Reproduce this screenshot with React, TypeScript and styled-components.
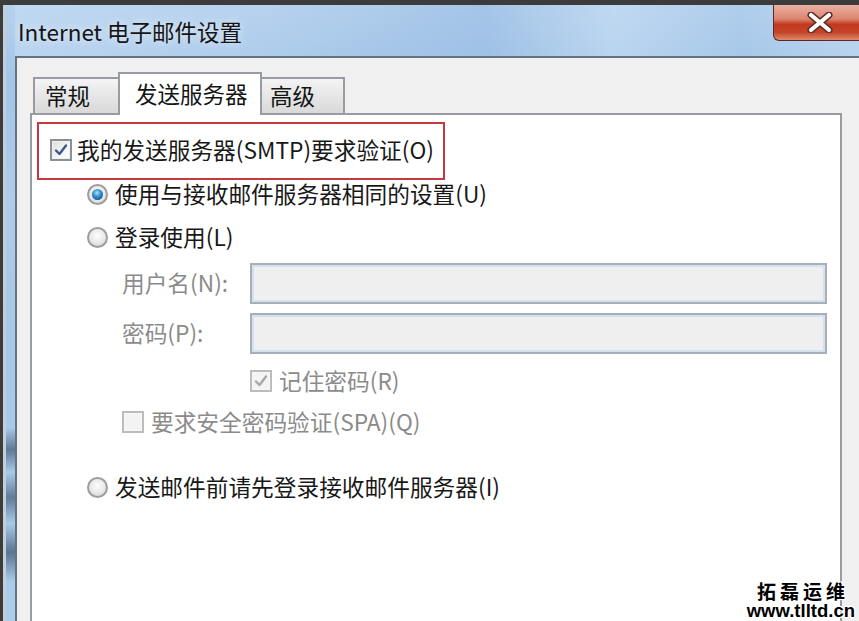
import styled, { createGlobalStyle } from "styled-components";

const GlobalStyle = createGlobalStyle`
html, body {
  margin: 0;
  padding: 0;
}
body {
  background: #3c3c3c;
  width: 859px;
  height: 621px;
  overflow: hidden;
  font-family: "Noto Sans CJK SC", "Noto Sans", sans-serif;
}
`;

const Screen = styled.div`
  position: relative;
  width: 859px;
  height: 621px;
  overflow: hidden;
  padding: 5px 0 0 3px;
  box-sizing: border-box;
`;

const Window = styled.div`
  width: 867px;
  height: 640px;
  box-sizing: border-box;
  border-left: 3px solid #c3ced9;
  padding-left: 9px;
  display: flex;
  flex-direction: column;
  background: linear-gradient(
    180deg,
    #b6d1ee 0%,
    #a4c5e8 12%,
    #aecbea 30%,
    #a6c7e8 55%,
    #a8c9ea 66%,
    #5d7994 69.5%,
    #a8c9ea 73%,
    #5f7c98 77%,
    #a9caea 81%,
    #587591 85.5%,
    #a9caea 90%,
    #b0cfee 100%
  );
`;

const TitleBar = styled.div`
  height: 51px;
  display: flex;
  align-items: center;
  background: linear-gradient(
    90deg,
    rgba(200, 222, 244, 0.55) 0%,
    rgba(186, 212, 240, 0.25) 30%,
    rgba(140, 180, 222, 0.4) 55%,
    rgba(205, 226, 246, 0.45) 70%,
    rgba(160, 196, 232, 0.3) 85%,
    rgba(200, 222, 244, 0.5) 100%
  );
`;

const Title = styled.div`
  padding-left: 3px;
  font-size: 22.5px;
  color: #151515;
  text-shadow: 0 0 8px rgba(255, 255, 255, 0.8);
`;

const CloseButton = styled.div`
  align-self: flex-start;
  margin-left: auto;
  width: 97px;
  height: 36px;
  box-sizing: border-box;
  border: 1px solid #5a2a22;
  border-top: none;
  border-radius: 0 0 0 6px;
  background: linear-gradient(
    180deg,
    #eab1a2 0%,
    #dc8570 40%,
    #c3391f 55%,
    #c5442a 78%,
    #df8a6c 100%
  );
  display: flex;
  align-items: center;
  padding-left: 33px;
`;

const Client = styled.div`
  flex: 1;
  border-top: 2px solid #66727e;
  border-left: 2px solid #66727e;
  background: #f0f0f0;
  padding: 14px 0 0 13px;
  display: flex;
  flex-direction: column;
`;

const TabStrip = styled.div`
  display: flex;
  align-items: flex-end;
  padding-left: 3px;
  position: relative;
  z-index: 1;
`;

const Tab = styled.div<{ $active?: boolean; $w: number; $pad: number }>`
  box-sizing: border-box;
  width: ${(p) => p.$w}px;
  height: ${(p) => (p.$active ? 43 : 36)}px;
  margin-bottom: ${(p) => (p.$active ? -2 : 0)}px;
  position: relative;
  z-index: ${(p) => (p.$active ? 2 : 1)};
  border: 2px solid #989ba1;
  border-bottom: none;
  background: ${(p) =>
    p.$active ? "#ffffff" : "linear-gradient(180deg, #f4f4f4 0%, #e6e6e6 50%, #d9d9d9 100%)"};
  padding: 0 0 2px ${(p) => p.$pad}px;
  display: flex;
  align-items: center;
  font-size: 22.5px;
  color: #151515;
  line-height: 1;
  & + & {
    margin-left: -2px;
  }
`;

const Panel = styled.div`
  width: 812px;
  flex: 1;
  box-sizing: border-box;
  border: 2px solid #989ba1;
  background: #ffffff;
  padding: 7px 0 0 5px;
`;

const Highlight = styled.div`
  width: 408px;
  height: 58px;
  box-sizing: border-box;
  border: 2px solid #c63a3f;
  display: flex;
  align-items: center;
  gap: 5px;
  padding: 0 0 2px 11px;
`;

const Options = styled.div`
  padding-left: 50px;
  display: flex;
  flex-direction: column;
`;

const Row = styled.div<{ $top?: number; $h?: number; $indent?: number; $gap?: number }>`
  display: flex;
  align-items: center;
  margin-top: ${(p) => p.$top ?? 0}px;
  height: ${(p) => p.$h ?? 28}px;
  padding-left: ${(p) => p.$indent ?? 0}px;
  gap: ${(p) => p.$gap ?? 7}px;
`;

const Label = styled.span<{ $disabled?: boolean }>`
  font-size: 22.7px;
  line-height: 1;
  color: ${(p) => (p.$disabled ? "#8b8b8b" : "#181818")};
  white-space: nowrap;
`;

const FieldLabel = styled(Label)`
  width: 128px;
  flex: none;
`;

const Input = styled.div`
  width: 577px;
  height: 41px;
  box-sizing: border-box;
  border: 2px solid #a9afb8;
  box-shadow: inset 0 0 0 2px #d4e1ef;
  background: #efefef;
`;

const Box = styled.span<{ $disabled?: boolean }>`
  flex: none;
  width: 22px;
  height: 22px;
  box-sizing: border-box;
  border: 2px solid ${(p) => (p.$disabled ? "#bcbcbc" : "#8c8f94")};
  background: ${(p) =>
    p.$disabled ? "#f3f3f3" : "linear-gradient(135deg, #dcdcdc 0%, #f6f6f6 60%, #ffffff 100%)"};
  box-shadow: inset 0 0 0 1px ${(p) => (p.$disabled ? "#f8f8f8" : "#f2f2f2")};
  display: flex;
  align-items: center;
  justify-content: center;
`;

const Radio = styled.span<{ $checked?: boolean }>`
  flex: none;
  width: 21px;
  height: 21px;
  box-sizing: border-box;
  border-radius: 50%;
  border: 2px solid #9b9d9f;
  background: radial-gradient(circle at 50% 40%, #fdfdfd 0%, #e8e8e8 55%, #cfcfcf 100%);
  display: flex;
  align-items: center;
  justify-content: center;
  &::after {
    content: "";
    display: ${(p) => (p.$checked ? "block" : "none")};
    width: 11px;
    height: 11px;
    border-radius: 50%;
    background: radial-gradient(circle at 45% 35%, #b5e2fb 0%, #3f9ad6 35%, #11609f 75%, #0b4b80 100%);
  }
`;

const Watermark = styled.div`
  position: absolute;
  right: 4px;
  bottom: 1px;
  display: flex;
  flex-direction: column;
  align-items: flex-end;
  color: #000;
  text-shadow: 1px 1px 0 #fff, -1px -1px 0 #fff, 1px -1px 0 #fff, -1px 1px 0 #fff, 0 0 3px #fff;
`;

const MarkName = styled.div`
  font-size: 19px;
  font-weight: 700;
  letter-spacing: 4px;
  line-height: 20px;
  padding-right: 6px;
`;

const MarkUrl = styled.div`
  font-family: "Liberation Sans", Arial, sans-serif;
  font-size: 18.5px;
  font-weight: 700;
  line-height: 19px;
`;

function Check({ disabled }: { disabled?: boolean }) {
  return (
    <svg width="14" height="14" viewBox="0 0 14 14">
      <path
        d="M2 7.5 L5.5 11 L12 2.5"
        fill="none"
        stroke={disabled ? "#a7a7a7" : "#3c5596"}
        strokeWidth="2.4"
        strokeLinecap="round"
        strokeLinejoin="round"
      />
    </svg>
  );
}

function CloseGlyph() {
  return (
    <svg width="26" height="21" viewBox="0 0 26 21">
      <path d="M4 3 L22 18 M22 3 L4 18" stroke="#5b2b25" strokeWidth="7" strokeLinecap="round" />
      <path d="M4 3 L22 18 M22 3 L4 18" stroke="#ffffff" strokeWidth="4.2" strokeLinecap="round" />
    </svg>
  );
}

export default function App() {
  return (
    <Screen>
      <GlobalStyle />
      <Window>
        <TitleBar>
          <Title>Internet 电子邮件设置</Title>
          <CloseButton>
            <CloseGlyph />
          </CloseButton>
        </TitleBar>
        <Client>
          <TabStrip>
            <Tab $w={87} $pad={10}>常规</Tab>
            <Tab $active $w={144} $pad={15}>发送服务器</Tab>
            <Tab $w={85} $pad={8}>高级</Tab>
          </TabStrip>
          <Panel>
            <Highlight>
              <Box>
                <Check />
              </Box>
              <Label>我的发送服务器(SMTP)要求验证(O)</Label>
            </Highlight>
            <Options>
              <Row>
                <Radio $checked />
                <Label>使用与接收邮件服务器相同的设置(U)</Label>
              </Row>
              <Row $top={15}>
                <Radio />
                <Label>登录使用(L)</Label>
              </Row>
              <Row $top={12} $h={41} $indent={35} $gap={0}>
                <FieldLabel $disabled>用户名(N):</FieldLabel>
                <Input />
              </Row>
              <Row $top={9} $h={41} $indent={35} $gap={0}>
                <FieldLabel $disabled>密码(P):</FieldLabel>
                <Input />
              </Row>
              <Row $top={15} $h={24} $indent={163}>
                <Box $disabled>
                  <Check disabled />
                </Box>
                <Label $disabled>记住密码(R)</Label>
              </Row>
              <Row $top={17} $h={24} $indent={35}>
                <Box $disabled />
                <Label $disabled>要求安全密码验证(SPA)(Q)</Label>
              </Row>
              <Row $top={39}>
                <Radio />
                <Label>发送邮件前请先登录接收邮件服务器(I)</Label>
              </Row>
            </Options>
          </Panel>
        </Client>
      </Window>
      <Watermark>
        <MarkName>拓磊运维</MarkName>
        <MarkUrl>www.tlltd.cn</MarkUrl>
      </Watermark>
    </Screen>
  );
}
